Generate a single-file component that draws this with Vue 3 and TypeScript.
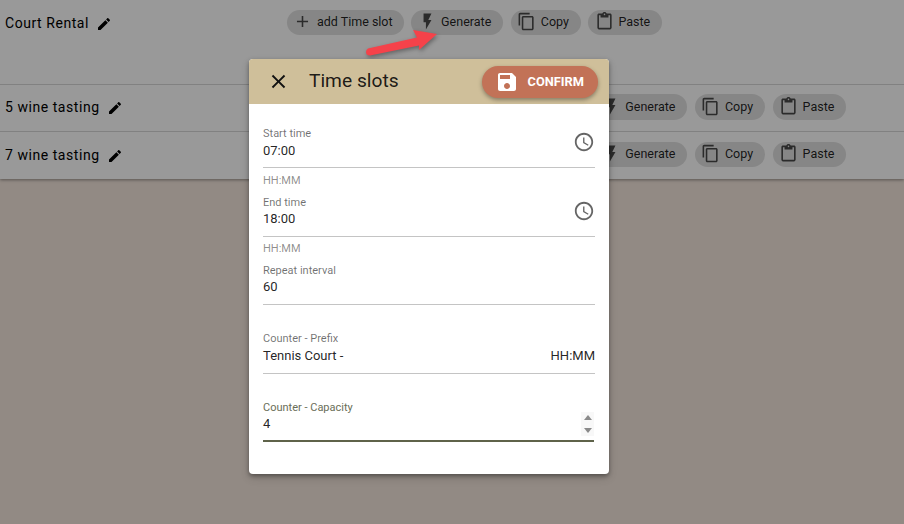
<script setup lang="ts">
const icons: Record<string, string> = {
  edit: 'M3 17.25V21h3.75L17.81 9.94l-3.75-3.75L3 17.25zM20.71 7.04c.39-.39.39-1.02 0-1.41l-2.34-2.34c-.39-.39-1.02-.39-1.41 0l-1.83 1.83 3.75 3.75 1.83-1.83z',
  add: 'M19 13h-6v6h-2v-6H5v-2h6V5h2v6h6v2z',
  flash: 'M7 2v11h3v9l7-12h-4l4-8z',
  copy: 'M16 1H4c-1.1 0-2 .9-2 2v14h2V3h12V1zm3 4H8c-1.1 0-2 .9-2 2v14c0 1.1.9 2 2 2h11c1.1 0 2-.9 2-2V7c0-1.1-.9-2-2-2zm0 16H8V7h11v14z',
  paste: 'M19 2h-4.18C14.4.84 13.3 0 12 0c-1.3 0-2.4.84-2.82 2H5c-1.1 0-2 .9-2 2v16c0 1.1.9 2 2 2h14c1.1 0 2-.9 2-2V4c0-1.1-.9-2-2-2zm-7 0c.55 0 1 .45 1 1s-.45 1-1 1-1-.45-1-1 .45-1 1-1zm7 18H5V4h2v3h10V4h2v16z',
  save: 'M17 3H5c-1.11 0-2 .9-2 2v14c0 1.1.89 2 2 2h14c1.1 0 2-.9 2-2V7l-4-4zm-5 16c-1.66 0-3-1.34-3-3s1.34-3 3-3 3 1.34 3 3-1.34 3-3 3zm3-10H5V5h10v4z',
  clock: 'M11.99 2C6.47 2 2 6.48 2 12s4.47 10 9.99 10C17.52 22 22 17.52 22 12S17.52 2 11.99 2zM12 20c-4.42 0-8-3.58-8-8s3.58-8 8-8 8 3.58 8 8-3.58 8-8 8zm.5-13H11v6l5.25 3.15.75-1.23-4.5-2.67z',
  close: 'M19 6.41L17.59 5 12 10.59 6.41 5 5 6.41 10.59 12 5 17.59 6.41 19 12 13.41 17.59 19 19 17.59 13.41 12 19 6.41z'
}
const rows = [
  { name: 'Court Rental', cls: 'first' },
  { name: '5 wine tasting', cls: 'second' },
  { name: '7 wine tasting', cls: 'third' }
]
const chips = [
  { icon: 'add', label: 'add Time slot' },
  { icon: 'flash', label: 'Generate' },
  { icon: 'copy', label: 'Copy' },
  { icon: 'paste', label: 'Paste' }
]
</script>

<template>
  <div class="page">
    <div class="list">
      <div v-for="r in rows" :key="r.name" class="row" :class="r.cls">
        <div class="title">
          <span class="name">{{ r.name }}</span>
          <svg class="pen" viewBox="0 0 24 24"><path :d="icons.edit" /></svg>
        </div>
        <div class="chips">
          <div v-for="c in chips" :key="c.label" class="chip">
            <svg class="chip-icon" viewBox="0 0 24 24"><path :d="icons[c.icon]" /></svg>
            <span>{{ c.label }}</span>
          </div>
        </div>
      </div>
    </div>
    <div class="overlay"></div>
    <svg class="arrow" viewBox="0 0 80 36" width="80" height="36">
      <path d="M3 21.5 L52 10.5 L48 3 L72 7 L54 23 L54 18.5 L5 28.5 Q1 28.5 1 25 Q1 22.5 3 21.5 Z" />
    </svg>
    <div class="dialog">
      <div class="head">
        <svg class="close" viewBox="0 0 24 24"><path :d="icons.close" /></svg>
        <div class="head-title">Time slots</div>
        <div class="confirm">
          <svg class="save" viewBox="0 0 24 24"><path :d="icons.save" /></svg>
          <span>CONFIRM</span>
        </div>
      </div>
      <div class="body">
        <div class="field f-start">
          <div class="control">
            <div class="col">
              <label>Start time</label>
              <div class="value">07:00</div>
            </div>
            <svg class="clock" viewBox="0 0 24 24"><path :d="icons.clock" /></svg>
          </div>
          <div class="hint">HH:MM</div>
        </div>
        <div class="field f-end">
          <div class="control">
            <div class="col">
              <label>End time</label>
              <div class="value">18:00</div>
            </div>
            <svg class="clock" viewBox="0 0 24 24"><path :d="icons.clock" /></svg>
          </div>
          <div class="hint">HH:MM</div>
        </div>
        <div class="field f-repeat">
          <div class="control">
            <div class="col">
              <label>Repeat interval</label>
              <div class="value">60</div>
            </div>
          </div>
        </div>
        <div class="field f-prefix">
          <div class="control">
            <div class="col">
              <label>Counter - Prefix</label>
              <div class="value split"><span>Tennis Court -</span><span>HH:MM</span></div>
            </div>
          </div>
        </div>
        <div class="field f-capacity">
          <div class="control focused">
            <div class="col">
              <label>Counter - Capacity</label>
              <div class="value">4</div>
            </div>
            <div class="spin">
              <i class="up"></i>
              <i class="down"></i>
            </div>
          </div>
        </div>
      </div>
    </div>
  </div>
</template>

<style>
html, body { margin: 0; padding: 0; }
</style>

<style scoped>
.page {
  position: relative;
  width: 904px;
  height: 524px;
  overflow: hidden;
  background: #f3e6dc;
  font-family: Roboto, "Liberation Sans", sans-serif;
  color: rgba(0, 0, 0, 0.87);
}
.list {
  background: #fff;
  box-shadow: 0 1px 3px rgba(0, 0, 0, 0.4);
}
.row {
  display: flex;
  align-items: flex-start;
  box-sizing: border-box;
  padding-left: 5px;
  border-bottom: 1px solid #d8d8d8;
}
.row.first { height: 85px; padding-top: 10px; }
.row.second { height: 47px; padding-top: 9px; }
.row.third { height: 47px; padding-top: 10px; border-bottom: none; }
.title {
  display: flex;
  align-items: center;
  gap: 7px;
  height: 26px;
}
.name {
  font-size: 14px;
  letter-spacing: 0.55px;
  color: #000;
}
.pen { width: 16px; height: 16px; fill: #000; margin-top: 1px; }
.chips { display: flex; gap: 7.5px; }
.first .chips { margin-left: 175px; }
.second .chips, .third .chips { margin-left: 348.5px; }
.chip {
  display: flex;
  align-items: center;
  height: 25px;
  box-sizing: border-box;
  padding: 0 12px 2px 6.5px;
  gap: 4.5px;
  border-radius: 13px;
  background: #e0e0e0;
  font-size: 12.5px;
  color: rgba(0, 0, 0, 0.87);
}
.chip:first-child { padding-right: 11px; }
.second .chip { height: 26px; }
.chip-icon { width: 19px; height: 19px; fill: rgba(0, 0, 0, 0.68); }
.overlay {
  position: absolute;
  inset: 0;
  background: rgba(0, 0, 0, 0.4);
}
.arrow {
  position: absolute;
  left: 365px;
  top: 27px;
  fill: #f5424a;
  filter: drop-shadow(1px 2px 2px rgba(0, 0, 0, 0.35));
}
.dialog {
  position: absolute;
  left: 249px;
  top: 59px;
  width: 360px;
  height: 415px;
  border-radius: 4px;
  overflow: hidden;
  background: #fff;
  box-shadow: 0 2px 4px rgba(0, 0, 0, 0.35), 0 4px 10px rgba(0, 0, 0, 0.14);
}
.head {
  display: flex;
  align-items: center;
  height: 45px;
  background: #cfbf9a;
  padding: 0 11px 0 18px;
}
.close { width: 23px; height: 23px; fill: #111; }
.head-title {
  flex: 1;
  margin-left: 19px;
  margin-bottom: 2px;
  font-size: 19.2px;
  color: rgba(0, 0, 0, 0.87);
}
.confirm {
  display: flex;
  align-items: center;
  gap: 9px;
  height: 32px;
  padding: 0 14px 0 13px;
  border-radius: 17px;
  background: #c27257;
  color: #fff;
  font-size: 12.8px;
  font-weight: 700;
  box-shadow: 0 2px 4px rgba(0, 0, 0, 0.35);
}
.save { width: 24px; height: 24px; fill: #fff; }
.body { padding: 0 14px; }
.field { display: flex; flex-direction: column; }
.control {
  display: flex;
  align-items: flex-start;
  justify-content: space-between;
  border-bottom: 1px solid #c4c4c4;
}
.col { flex: 1; display: flex; flex-direction: column; }
label {
  font-size: 11px;
  line-height: 14px;
  color: rgba(0, 0, 0, 0.56);
}
.value {
  margin-top: 2px;
  font-size: 13px;
  line-height: 16px;
  color: rgba(0, 0, 0, 0.87);
}
.split { display: flex; justify-content: space-between; }
.hint {
  font-size: 11px;
  line-height: 14px;
  margin-top: 6px;
  color: rgba(0, 0, 0, 0.46);
}
.clock { width: 22px; height: 22px; fill: rgba(0, 0, 0, 0.6); margin-top: 4px; }
.f-start { margin-top: 23px; }
.f-start .control { height: 40px; }
.f-end { margin-top: 8px; }
.f-end .control { height: 40px; }
.f-end .hint { margin-top: 5px; }
.f-end .value, .f-repeat .value, .f-capacity .value { margin-top: 1px; }
.f-repeat { margin-top: 8px; }
.f-repeat .control { height: 40px; }
.f-prefix { margin-top: 27px; }
.f-prefix .control { height: 41px; }
.f-capacity { margin-top: 27px; }
.f-capacity .control {
  height: 39px;
  border-bottom: 2px solid #5f634a;
  margin-right: 1px;
}
.f-capacity label { color: #6a6e58; }
.spin {
  display: flex;
  flex-direction: column;
  align-items: center;
  gap: 8px;
  width: 13px;
  margin-top: 11px;
  padding: 3px 0;
  background: #f8f8f8;
}
.spin i { display: block; width: 0; height: 0; border-left: 4px solid transparent; border-right: 4px solid transparent; }
.spin .up { border-bottom: 5px solid #8a8a8a; }
.spin .down { border-top: 5px solid #8a8a8a; }
</style>
